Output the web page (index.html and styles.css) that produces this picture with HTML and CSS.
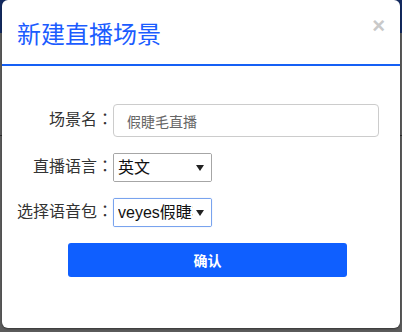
FILE: index.html
```html
<!DOCTYPE html>
<html lang="zh-CN">
<head>
  <meta charset="UTF-8" />
  <title>新建直播场景</title>
  <link rel="stylesheet" href="styles.css">
</head>
<body>
  <div class="page">
    <div class="page-top"></div>
    <div class="page-rest">
      <div class="page-line"></div>
    </div>
  </div>

  <!-- New scene dialog -->
  <div class="modal">
    <div class="modal-header">
      <h2 class="modal-title">新建直播场景</h2>
      <span class="close">×</span>
    </div>
    <form class="modal-body">
      <div class="row">
        <label class="row-label">场景名<span class="colon" lang="zh-TW">：</span></label>
        <input class="text-input" type="text" value="假睫毛直播" />
      </div>
      <div class="row">
        <label class="row-label">直播语言<span class="colon" lang="zh-TW">：</span></label>
        <div class="select-box">
          <select>
            <option>英文</option>
            <option>中文</option>
          </select>
        </div>
      </div>
      <div class="row">
        <label class="row-label">选择语音包<span class="colon" lang="zh-TW">：</span></label>
        <div class="select-box focused">
          <select>
            <option>veyes假睫毛语音包</option>
          </select>
        </div>
      </div>
      <button type="button" class="confirm">确认</button>
    </form>
  </div>
</body>
</html>
```

FILE: styles.css
```css
body {
  margin: 0;
  padding: 0;
  width: 402px;
  height: 332px;
  overflow: hidden;
  font-family: "Microsoft YaHei", "Noto Sans CJK SC", "Liberation Sans", sans-serif;
}

.page {
  height: 332px;
  display: flex;
  flex-direction: column;
}

.page-top {
  height: 33px;
  background: #132a60;
}

.page-rest {
  flex: 1;
  background: #5b5b5b;
  padding-top: 102px;
}

.page-line {
  height: 1px;
  background: #2e2e2e;
}

.modal {
  position: absolute;
  top: 0;
  left: 2px;
  width: 398px;
  height: 328px;
  background: #fff;
  border-radius: 6px;
  box-shadow: 0 1px 2px rgba(0, 0, 0, 0.4);
}

.modal-header {
  height: 64px;
  border-bottom: 2px solid #1560f5;
  display: flex;
  align-items: flex-start;
  justify-content: space-between;
  padding: 0 15px 0 15px;
}

.modal-title {
  margin: 19px 0 0;
  font-size: 24px;
  font-weight: normal;
  line-height: 28px;
  color: #1b5cff;
}

.close {
  margin-top: 13px;
  font-family: "Liberation Sans", sans-serif;
  font-size: 22px;
  font-weight: bold;
  line-height: 26px;
  color: #c9c9c9;
}

.modal-body {
  padding-top: 38px;
  display: flex;
  flex-direction: column;
}

.row {
  display: flex;
  align-items: center;
  margin-bottom: 16px;
}

.row-label {
  width: 111px;
  flex: none;
  text-align: right;
  font-size: 16px;
  line-height: 22px;
  color: #333;
  padding-bottom: 6px;
}

.colon {
  font-family: "Noto Sans CJK TC", "Noto Sans CJK JP", sans-serif;
}

.text-input {
  width: 266px;
  height: 33px;
  box-sizing: border-box;
  padding: 0 13px;
  border: 1px solid #ccc;
  border-radius: 4px;
  outline: none;
  font-family: inherit;
  font-size: 14px;
  color: #666;
}

.select-box {
  position: relative;
  width: 99px;
  height: 29px;
  box-sizing: border-box;
  border: 1px solid #a6a6a6;
  border-radius: 2px;
  overflow: hidden;
}

.select-box.focused {
  border-color: #79a3ee;
  box-shadow: 0 0 1px #9fbef5;
}

.select-box::after {
  content: "";
  position: absolute;
  right: 7px;
  top: 11px;
  border-left: 4px solid transparent;
  border-right: 4px solid transparent;
  border-top: 6px solid #222;
}

.select-box select {
  appearance: none;
  -webkit-appearance: none;
  width: 100%;
  height: 100%;
  border: none;
  outline: none;
  background: #fff;
  padding: 0 18px 0 4px;
  font-family: "Liberation Sans", "Noto Sans CJK SC", sans-serif;
  font-size: 16px;
  color: #111;
}

.confirm {
  margin: 0 0 0 66px;
  width: 279px;
  height: 34px;
  border: none;
  border-radius: 3px;
  background: #0f5fff;
  color: #fff;
  font-family: inherit;
  font-size: 14px;
  font-weight: bold;
}
```
